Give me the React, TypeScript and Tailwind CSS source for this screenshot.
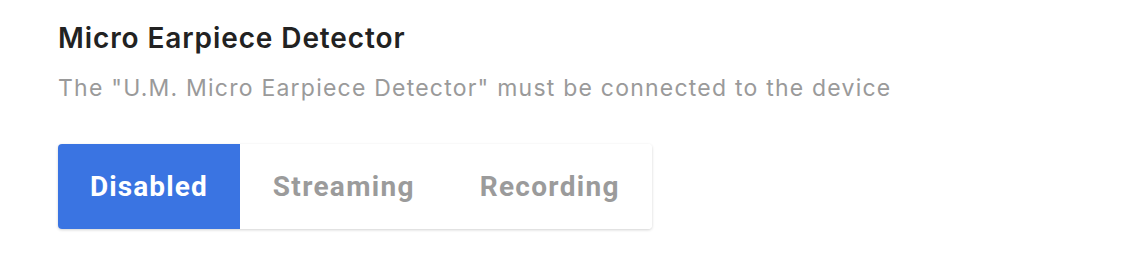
import { useState } from "react";

const modes = ["Disabled", "Streaming", "Recording"];

export default function App() {
  const [mode, setMode] = useState("Disabled");

  return (
    <div className="min-h-[260px] w-full bg-white px-[58px] pt-[20px] font-['Inter','Noto_Sans',sans-serif]">
      <h2 className="text-[28px] font-semibold leading-[36px] tracking-[0.9px] text-[#222222]">
        Micro Earpiece Detector
      </h2>
      <p className="mt-[17px] text-[23px] leading-[30px] tracking-[1.22px] text-[#9a9a9a]">
        The "U.M. Micro Earpiece Detector" must be connected to the device
      </p>
      <div className="mt-[41px] inline-flex h-[85px] overflow-hidden rounded-[4px] bg-white shadow-[0_1px_3px_rgba(0,0,0,0.18)]">
        {modes.map((m) => (
          <button
            key={m}
            type="button"
            onClick={() => setMode(m)}
            className={
              m === mode
                ? "flex items-center bg-[#3a74e2] pl-[32px] pr-[32px] font-['Roboto','Liberation_Sans',sans-serif] text-[28px] font-bold tracking-[1.1px] text-white"
                : "flex items-center bg-white pl-[33px] pr-[32px] font-['Roboto','Liberation_Sans',sans-serif] text-[28px] font-bold tracking-[1.3px] text-[#9b9b9b]"
            }
          >
            {m}
          </button>
        ))}
      </div>
    </div>
  );
}
